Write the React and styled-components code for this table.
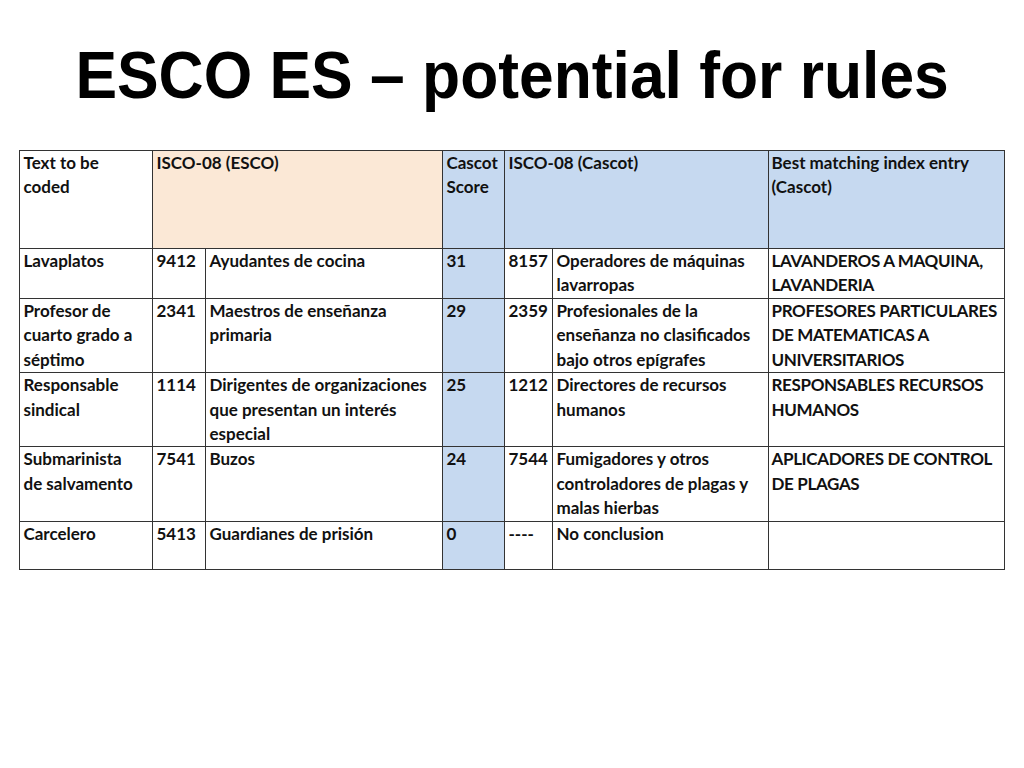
import React from "react";
import styled, { createGlobalStyle } from "styled-components";

const GlobalStyle = createGlobalStyle`
  html, body {
    margin: 0;
    padding: 0;
    background: #ffffff;
  }
`;

const Slide = styled.div`
  width: 1024px;
  height: 768px;
  background: #ffffff;
  display: flex;
  flex-direction: column;
  align-items: center;
`;

const TitleBox = styled.div`
  height: 150px;
  width: 100%;
  display: flex;
  justify-content: center;
  padding-top: 40px;
  box-sizing: border-box;
`;

const Title = styled.h1`
  margin: 0;
  font-family: "Liberation Sans", Arial, sans-serif;
  font-weight: 700;
  font-size: 66px;
  line-height: 70px;
  color: #000000;
  white-space: nowrap;
  transform: scaleX(0.945);
`;

const Table = styled.table`
  table-layout: fixed;
  border-collapse: collapse;
  width: 984px;
  font-family: Lato, "Open Sans", sans-serif;
  font-weight: 700;
  font-size: 17px;
  color: #111111;
`;

const Cell = styled.td`
  border: 1.5px solid #333333;
  vertical-align: top;
  padding: 0 3px;
  line-height: 24.4px;
  white-space: nowrap;
  overflow: hidden;
  letter-spacing: ${(p) => (p.$tight ? "-0.35px" : "0")};
  background: ${(p) =>
    p.$tone === "peach" ? "#fbe8d6" : p.$tone === "blue" ? "#c6d9f0" : "#ffffff"};
`;

const Row = styled.tr`
  height: ${(p) => p.$h}px;
`;

const widths = [133, 53, 237, 62, 48, 215, 236];

const rows = [
  {
    h: 50,
    cells: [
      ["Lavaplatos"],
      ["9412"],
      ["Ayudantes de cocina"],
      ["31"],
      ["8157"],
      ["Operadores de máquinas", "lavarropas"],
      ["LAVANDEROS A MAQUINA,", "LAVANDERIA"],
    ],
  },
  {
    h: 74,
    cells: [
      ["Profesor de", "cuarto grado a", "séptimo"],
      ["2341"],
      ["Maestros de enseñanza", "primaria"],
      ["29"],
      ["2359"],
      ["Profesionales de la", "enseñanza no clasificados", "bajo otros epígrafes"],
      ["PROFESORES PARTICULARES", "DE MATEMATICAS A", "UNIVERSITARIOS"],
    ],
  },
  {
    h: 74,
    cells: [
      ["Responsable", "sindical"],
      ["1114"],
      ["Dirigentes de organizaciones", "que presentan un interés", "especial"],
      ["25"],
      ["1212"],
      ["Directores de recursos", "humanos"],
      ["RESPONSABLES RECURSOS", "HUMANOS"],
    ],
  },
  {
    h: 74,
    cells: [
      ["Submarinista", "de salvamento"],
      ["7541"],
      ["Buzos"],
      ["24"],
      ["7544"],
      ["Fumigadores y otros", "controladores de plagas y", "malas hierbas"],
      ["APLICADORES DE CONTROL", "DE PLAGAS"],
    ],
  },
  {
    h: 48,
    cells: [
      ["Carcelero"],
      ["5413"],
      ["Guardianes de prisión"],
      ["0"],
      ["----"],
      ["No conclusion"],
      [""],
    ],
  },
];

const Lines = ({ lines }) =>
  lines.map((l, i) => (
    <React.Fragment key={i}>
      {i > 0 && <br />}
      {l}
    </React.Fragment>
  ));

export default function App() {
  return (
    <>
      <GlobalStyle />
      <Slide>
        <TitleBox>
          <Title>ESCO ES – potential for rules</Title>
        </TitleBox>
        <Table>
          <colgroup>
            {widths.map((w, i) => (
              <col key={i} style={{ width: w }} />
            ))}
          </colgroup>
          <tbody>
            <Row $h={98}>
              <Cell>
                <Lines lines={["Text to be", "coded"]} />
              </Cell>
              <Cell colSpan={2} $tone="peach">
                ISCO-08 (ESCO)
              </Cell>
              <Cell $tone="blue">
                <Lines lines={["Cascot", "Score"]} />
              </Cell>
              <Cell colSpan={2} $tone="blue">
                ISCO-08 (Cascot)
              </Cell>
              <Cell $tone="blue">
                <Lines lines={["Best matching index entry", "(Cascot)"]} />
              </Cell>
            </Row>
            {rows.map((r, ri) => (
              <Row key={ri} $h={r.h}>
                {r.cells.map((c, ci) => (
                  <Cell
                    key={ci}
                    $tone={ci === 3 ? "blue" : undefined}
                    $tight={ci === 6}
                  >
                    <Lines lines={c} />
                  </Cell>
                ))}
              </Row>
            ))}
          </tbody>
        </Table>
      </Slide>
    </>
  );
}
